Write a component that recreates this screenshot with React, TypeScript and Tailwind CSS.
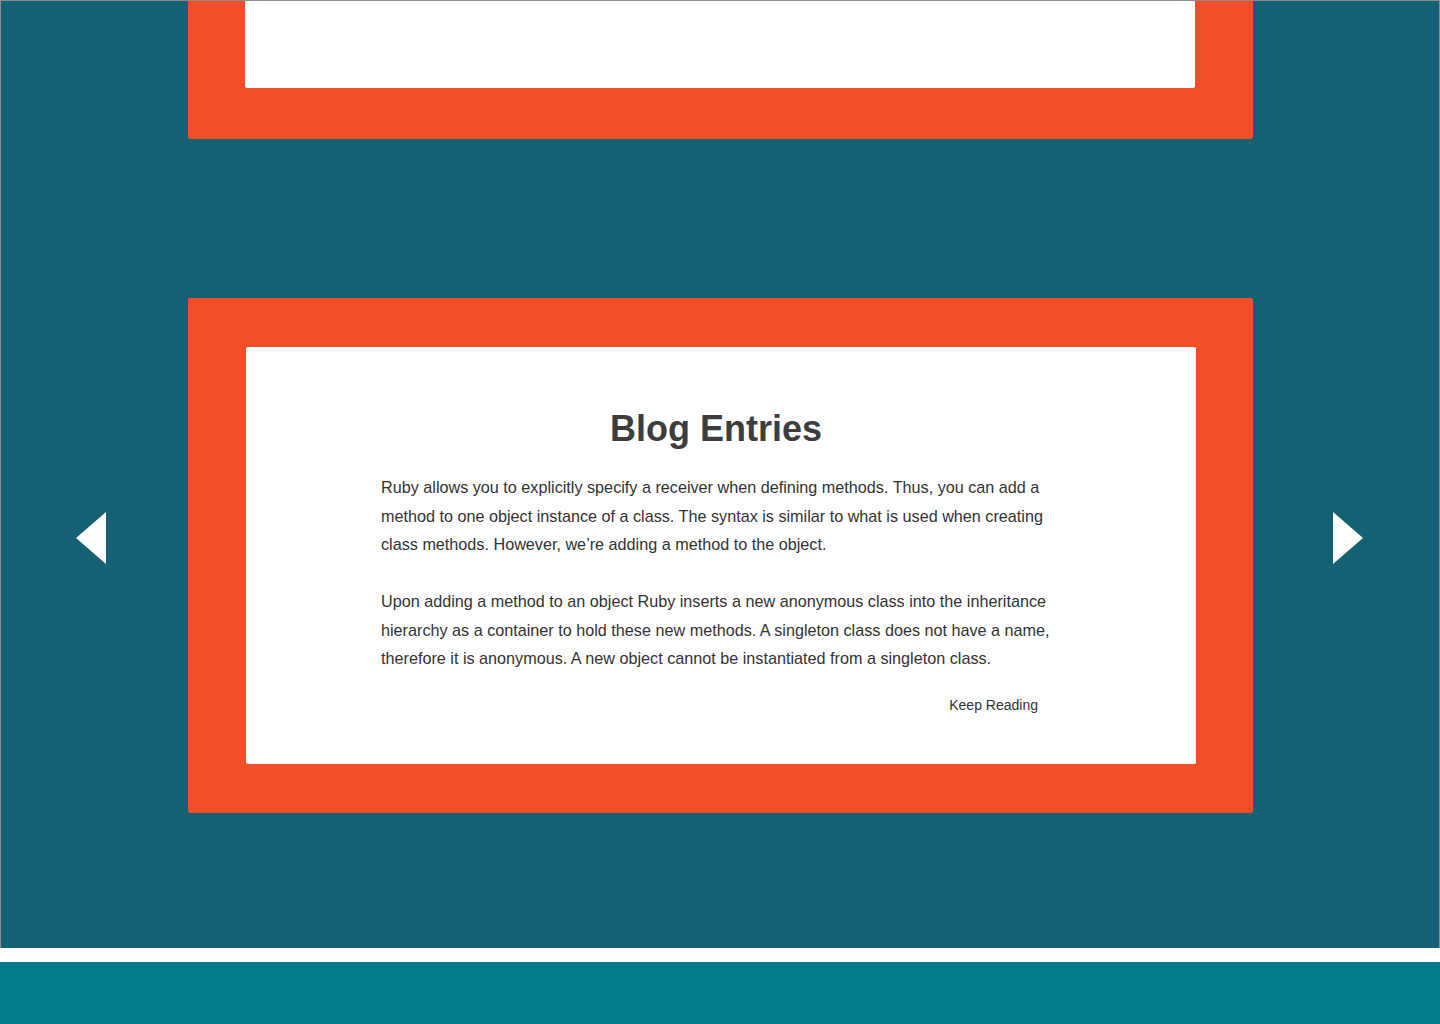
import React from 'react';

const ArrowLeft: React.FC = () => (
  <svg width="30" height="52" viewBox="0 0 30 52" className="block">
    <polygon points="30,0 30,52 0,26" fill="#ffffff" />
  </svg>
);

const ArrowRight: React.FC = () => (
  <svg width="30" height="52" viewBox="0 0 30 52" className="block">
    <polygon points="0,0 30,26 0,52" fill="#ffffff" />
  </svg>
);

export default function App() {
  return (
    <div className="w-[1440px] h-[1024px] bg-white overflow-hidden" style={{ fontFamily: '"Liberation Sans", Arial, sans-serif' }}>
      <section className="h-[948px] bg-[#156174] border-t border-l border-r border-[#8c8c8c] flex flex-col items-center">
        {/* previous slide, cut off above */}
        <div className="w-[1065px] bg-[#f24e27] rounded-b-[2px] pl-[57px] pr-[58px] pb-[51px]">
          <div className="h-[87px] bg-white rounded-b-[2px]" />
        </div>

        <div className="mt-[159px] w-full flex items-start">
          <div className="w-[187px] shrink-0 pl-[75px] mt-[214px]">
            <ArrowLeft />
          </div>

          <div className="w-[1065px] shrink-0 bg-[#f24e27] rounded-[2px] pt-[49px] pb-[49px] pl-[58px] pr-[57px]">
            <div className="bg-white rounded-[2px] pt-[60px] pb-[49px]">
              <div className="w-[680px] mx-auto">
                <h2 className="text-center text-[36px] leading-[43px] font-bold text-[#3d3d3d] ml-[-10px]">Blog Entries</h2>
                <div className="mt-[23px] text-[16.2px] leading-[28.5px] text-[#333333]">
                  <p>
                    Ruby allows you to explicitly specify a receiver when defining methods. Thus, you can add a method to one object instance of a class. The syntax is similar to what is used when creating class methods. However, we’re adding a method to the object.
                  </p>
                  <p className="mt-[28.5px]">
                    Upon adding a method to an object Ruby inserts a new anonymous class into the inheritance hierarchy as a container to hold these new methods. A singleton class does not have a name, therefore it is anonymous. A new object cannot be instantiated from a singleton class.
                  </p>
                </div>
                <div className="mt-[22px] flex justify-end pr-[23px]">
                  <a className="text-[14px] leading-[20px] text-[#333333]">Keep Reading</a>
                </div>
              </div>
            </div>
          </div>

          <div className="w-[187px] shrink-0 pl-[80px] mt-[214px]">
            <ArrowRight />
          </div>
        </div>
      </section>
      <div className="h-[14px] bg-white" />
      <div className="h-[62px] bg-[#057b8a]" />
    </div>
  );
}
